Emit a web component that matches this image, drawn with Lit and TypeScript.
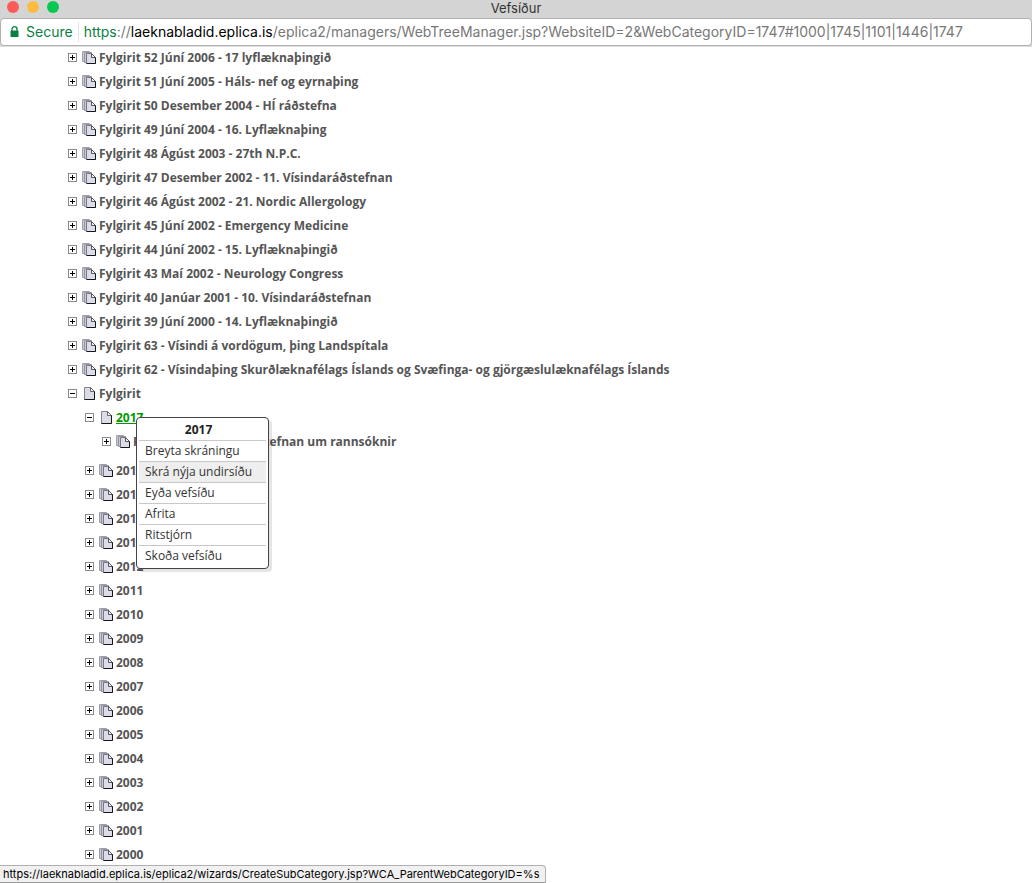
import { LitElement, html, css, svg } from "lit";
import { customElement, property, state } from "lit/decorators.js";

interface TreeItem {
  label: string;
  open?: boolean;
  active?: boolean;
  children?: TreeItem[];
}

const years = ["2016", "2015", "2014", "2013", "2012", "2011", "2010", "2009", "2008", "2007", "2006", "2005", "2004", "2003", "2002", "2001", "2000"];

const items: TreeItem[] = [
  ...[
    "Fylgirit 52 Júní 2006 - 17 lyflæknaþingið",
    "Fylgirit 51 Júní 2005 - Háls- nef og eyrnaþing",
    "Fylgirit 50 Desember 2004 - HÍ ráðstefna",
    "Fylgirit 49 Júní 2004 - 16. Lyflæknaþing",
    "Fylgirit 48 Ágúst 2003 - 27th N.P.C.",
    "Fylgirit 47 Desember 2002 - 11. Vísindaráðstefnan",
    "Fylgirit 46 Ágúst 2002 - 21. Nordic Allergology",
    "Fylgirit 45 Júní 2002 - Emergency Medicine",
    "Fylgirit 44 Júní 2002 - 15. Lyflæknaþingið",
    "Fylgirit 43 Maí 2002 - Neurology Congress",
    "Fylgirit 40 Janúar 2001 - 10. Vísindaráðstefnan",
    "Fylgirit 39 Júní 2000 - 14. Lyflæknaþingið",
    "Fylgirit 63 - Vísindi á vordögum, þing Landspítala",
    "Fylgirit 62 - Vísindaþing Skurðlæknafélags Íslands og Svæfinga- og gjörgæslulæknafélags Íslands",
  ].map((label) => ({ label })),
  {
    label: "Fylgirit",
    open: true,
    children: [
      {
        label: "2017",
        open: true,
        active: true,
        children: [{ label: "Fylgirit 91 – XVIII. ráðstefnan um rannsóknir" }],
      },
      ...years.map((label) => ({ label })),
    ],
  },
];

const toggleIcon = (open: boolean) => html`<svg width="9" height="9" viewBox="0 0 9 9" shape-rendering="crispEdges" aria-hidden="true">
  <rect x="0.5" y="0.5" width="8" height="8" fill="#fff" stroke="#8c8c8c" />
  <path d="M2 4.5h5" stroke="#000" />
  ${open ? "" : svg`<path d="M4.5 2v5" stroke="#000" />`}
</svg>`;

const pageIcon = html`<svg width="14" height="14" viewBox="0 0 14 14" aria-hidden="true">
  <path d="M2.5 0.5h6l4 4v8h-10z" fill="#dcdce6" stroke="#85858f" />
  <path d="M8.5 0.5v4h4z" fill="#f4f4fa" stroke="#66666f" />
  <path d="M12.5 4.5v8h-10" fill="none" stroke="#16161c" />
</svg>`;

const pagesIcon = html`<svg width="14" height="14" viewBox="0 0 14 14" aria-hidden="true">
  <path d="M0.5 0.5h7v10h-7z" fill="#c8c8d6" stroke="#a0a0ac" />
  <path d="M2.5 1.5h7v10h-7z" fill="#c8c8d6" stroke="#9494a0" />
  <path d="M4.5 2.5h5l4 4v6h-9z" fill="#dcdce6" stroke="#787884" />
  <path d="M9.5 2.5v4h4z" fill="#f4f4fa" stroke="#55555f" />
  <path d="M13.5 6.5v6h-9" fill="none" stroke="#16161c" />
</svg>`;

@customElement("context-menu")
export class ContextMenu extends LitElement {
  @property() heading = "";
  @property({ type: Array }) actions: string[] = [];
  @property({ type: Number }) current = -1;

  static styles = css`
    .menu {
      display: flex;
      flex-direction: column;
      box-sizing: border-box;
      padding: 2px;
      background: #fff;
      border: 1px solid #444;
      border-radius: 4px;
      box-shadow: 3px 3px 0 rgba(0, 0, 0, 0.1);
      color: #333;
      font: 12px/20px "Open Sans", sans-serif;
    }
    .heading {
      padding-right: 8px;
      color: #222;
      font-weight: 700;
      text-align: center;
    }
    .action {
      padding: 0 14px 0 6px;
      border: 0;
      border-top: 1px solid #c8c8c8;
      background: none;
      color: inherit;
      font: inherit;
      text-align: left;
      white-space: nowrap;
    }
    .current,
    .action:hover {
      background: #eee;
    }
  `;

  render() {
    return html`<div class="menu" role="menu" aria-label=${this.heading}>
      <div class="heading">${this.heading}</div>
      ${this.actions.map(
        (a, i) => html`<button class="action ${i === this.current ? "current" : ""}" role="menuitem">${a}</button>`
      )}
    </div>`;
  }
}

@customElement("app-root")
export class AppRoot extends LitElement {
  @state() private tree = items;

  static styles = css`
    :host {
      display: flex;
      flex-direction: column;
      height: 100vh;
      overflow: hidden;
      position: relative;
      background: #fff;
      font-family: "Open Sans", sans-serif;
    }
    .titlebar {
      display: grid;
      grid-template-columns: 1fr auto 1fr;
      align-items: center;
      height: 18px;
      flex: none;
      padding: 0 7px;
      background: #d4d4d4;
      color: #333;
      font: 13px/14px Inter, sans-serif;
    }
    .title {
      padding-bottom: 3px;
    }
    .lights {
      display: flex;
      gap: 8px;
      padding-bottom: 4px;
    }
    .light {
      width: 12px;
      height: 12px;
      padding: 0;
      border: 0;
      border-radius: 50%;
    }
    .close {
      background: #fc5b57;
    }
    .minimise {
      background: #fdbc40;
    }
    .zoom {
      background: #05c850;
    }
    .location {
      flex: none;
      background: #d4d4d4;
      border-bottom: 1px solid #e0e0e0;
    }
    .address {
      display: flex;
      align-items: center;
      height: 26px;
      padding: 0 9px;
      background: #fff;
      border: 1px solid #b0b0b0;
      border-radius: 4px;
      font: 14px/20px Inter, sans-serif;
      white-space: nowrap;
      overflow: hidden;
    }
    .secure {
      display: flex;
      align-items: center;
      gap: 7px;
      padding: 0 5px 0 0;
      border: 0;
      border-right: 1px solid #e4e4e4;
      background: none;
      color: #0b8043;
      font: inherit;
    }
    .url {
      padding-left: 5px;
      color: #777;
    }
    .scheme {
      color: #0b8043;
    }
    .domain {
      color: #000;
    }
    .content {
      flex: 1;
      min-height: 0;
      overflow: hidden;
      padding-left: 68px;
    }
    .branch {
      margin: 0;
      padding: 0;
      list-style: none;
    }
    .branch .branch {
      padding-left: 17px;
    }
    .branch .branch .branch {
      padding-bottom: 5px;
    }
    .row {
      display: flex;
      align-items: center;
      height: 24px;
      padding-bottom: 2px;
      box-sizing: border-box;
      position: relative;
    }
    .toggle {
      display: flex;
      padding: 0 0 1px;
      margin-right: 5px;
      border: 0;
      background: none;
    }
    .icon {
      display: flex;
      margin-right: 3px;
    }
    .label {
      color: #555;
      font-size: 12px;
      font-weight: 700;
      line-height: 16px;
      text-decoration: none;
      white-space: nowrap;
    }
    .active {
      color: #090;
      text-decoration: underline;
    }
    .popup {
      position: absolute;
      top: 10px;
      left: 51px;
      z-index: 1;
    }
    .status {
      position: absolute;
      left: 0;
      bottom: 0;
      z-index: 2;
      padding: 0 6px 0 3px;
      background: #f1f1f1;
      border: 1px solid #b0b0b0;
      border-left: 0;
      border-bottom-color: #999;
      border-top-right-radius: 4px;
      color: #000;
      font: 11px/16px Inter, sans-serif;
      white-space: nowrap;
    }
  `;

  private toggle(item: TreeItem) {
    if (!item.children) return;
    item.open = !item.open;
    this.tree = [...this.tree];
  }

  private branch(list: TreeItem[]): unknown {
    return html`<ul class="branch">
      ${list.map(
        (item) => html`<li>
          <div class="row">
            <button class="toggle" aria-label=${item.label} @click=${() => this.toggle(item)}>${toggleIcon(!!item.open)}</button>
            <span class="icon">${item.children ? pageIcon : pagesIcon}</span>
            <a class="label ${item.active ? "active" : ""}" href="#">${item.label}</a>
            ${item.active
              ? html`<context-menu
                  class="popup"
                  heading="2017"
                  .current=${1}
                  .actions=${["Breyta skráningu", "Skrá nýja undirsíðu", "Eyða vefsíðu", "Afrita", "Ritstjórn", "Skoða vefsíðu"]}
                ></context-menu>`
              : ""}
          </div>
          ${item.open && item.children ? this.branch(item.children) : ""}
        </li>`
      )}
    </ul>`;
  }

  render() {
    return html`
      <header class="titlebar">
        <div class="lights">
          <button class="light close" aria-label="Close"></button>
          <button class="light minimise" aria-label="Minimise"></button>
          <button class="light zoom" aria-label="Zoom"></button>
        </div>
        <div class="title">Vefsíður</div>
      </header>
      <div class="location">
        <div class="address">
          <button class="secure">
            <svg width="9" height="12" viewBox="0 0 9 12" aria-hidden="true">
              <path d="M2 5V3.2a2.5 2.5 0 0 1 5 0V5" fill="none" stroke="#0b8043" stroke-width="1.3" />
              <rect x="0.5" y="4.5" width="8" height="6.5" rx="0.5" fill="#0b8043" />
            </svg>
            <span>Secure</span>
          </button>
          <div class="url"><span class="scheme">https</span>://<span class="domain">laeknabladid.eplica.is</span>/eplica2/managers/WebTreeManager.jsp?WebsiteID=2&amp;WebCategoryID=1747#1000|1745|1101|1446|1747</div>
        </div>
      </div>
      <main class="content">${this.branch(this.tree)}</main>
      <div class="status">https://laeknabladid.eplica.is/eplica2/wizards/CreateSubCategory.jsp?WCA_ParentWebCategoryID=%s</div>
    `;
  }
}
